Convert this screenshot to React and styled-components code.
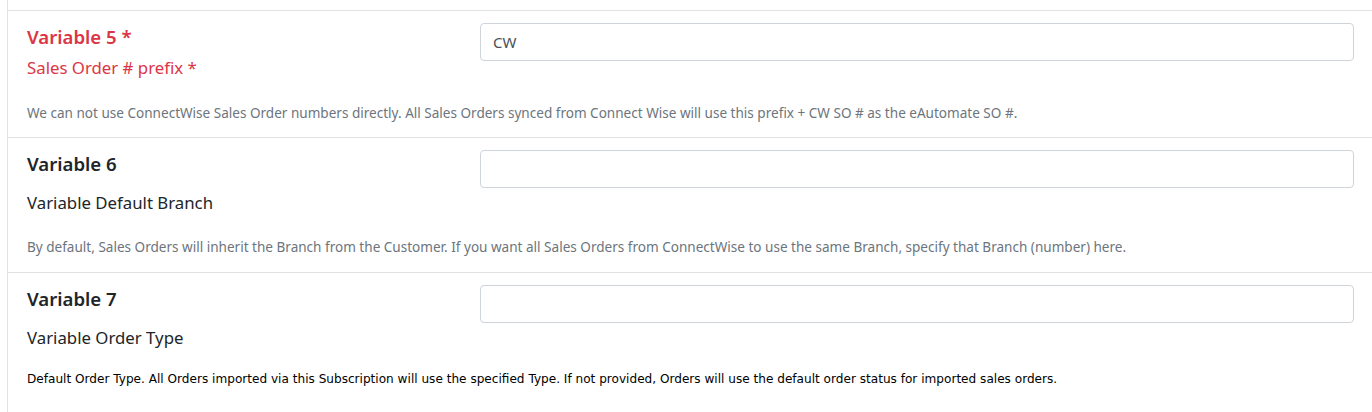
import React from "react"
import styled, { createGlobalStyle } from "styled-components"

const Global = createGlobalStyle`
  body {
    margin: 0;
    background: #fff;
    font-family: "Noto Sans", "Open Sans", sans-serif;
  }
`

const Page = styled.div`
  margin-left: 7px;
  padding-top: 10px;
  border-left: 1px solid #e3e3e3;
  height: 402px;
  overflow: hidden;
`

const Section = styled.div`
  display: grid;
  grid-template-columns: 453px 1fr;
  border-top: 1px solid #e1e1e1;
  padding: 12px 18px ${(p) => p.$bottom}px 19px;
`

const LabelCol = styled.div`
  display: flex;
  flex-direction: column;
  padding-top: 2px;
`

const Title = styled.div`
  font-size: 18.6px;
  line-height: 23px;
  font-weight: 600;
  color: ${(p) => (p.$required ? "#dc3545" : "#212529")};
`

const Subtitle = styled.div`
  margin-top: ${(p) => p.$gap}px;
  font-size: 16.8px;
  line-height: 24px;
  color: ${(p) => (p.$required ? "#dc3545" : "#212529")};
`

const Input = styled.input`
  box-sizing: border-box;
  width: 100%;
  height: 38px;
  padding: 6px 12px;
  border: 1px solid #ced4da;
  border-radius: 4px;
  font-family: "Noto Sans", "Open Sans", sans-serif;
  font-size: 15px;
  color: #495057;
  background: #fff;
  outline: none;
`

const Note = styled.div`
  grid-column: 1 / -1;
  margin-top: ${(p) => p.$gap}px;
  font-size: ${(p) => (p.$plain ? 12.1 : 13.55)}px;
  line-height: 20px;
  white-space: nowrap;
  color: ${(p) => (p.$plain ? "#000" : "#6c757d")};
  font-family: ${(p) =>
    p.$plain ? '"DejaVu Sans", Verdana, sans-serif' : '"Noto Sans", "Open Sans", sans-serif'};
`

const fields = [
  {
    title: "Variable 5 *",
    label: "Sales Order # prefix *",
    value: "CW",
    required: true,
    labelGap: 8,
    noteGap: 23,
    bottom: 14,
    note: "We can not use ConnectWise Sales Order numbers directly. All Sales Orders synced from Connect Wise will use this prefix + CW SO # as the eAutomate SO #.",
  },
  {
    title: "Variable 6",
    label: "Variable Default Branch",
    value: "",
    labelGap: 16,
    noteGap: 22,
    bottom: 15,
    note: "By default, Sales Orders will inherit the Branch from the Customer. If you want all Sales Orders from ConnectWise to use the same Branch, specify that Branch (number) here.",
  },
  {
    title: "Variable 7",
    label: "Variable Order Type",
    value: "",
    labelGap: 16,
    noteGap: 19,
    bottom: 20,
    plain: true,
    note: "Default Order Type. All Orders imported via this Subscription will use the specified Type. If not provided, Orders will use the default order status for imported sales orders.",
  },
]

export default function App() {
  return (
    <>
      <Global />
      <Page>
        {fields.map((f) => (
          <Section key={f.title} $bottom={f.bottom}>
            <LabelCol>
              <Title $required={f.required}>{f.title}</Title>
              <Subtitle $required={f.required} $gap={f.labelGap}>
                {f.label}
              </Subtitle>
            </LabelCol>
            <div>
              <Input defaultValue={f.value} />
            </div>
            <Note $gap={f.noteGap} $plain={f.plain}>
              {f.note}
            </Note>
          </Section>
        ))}
      </Page>
    </>
  )
}
